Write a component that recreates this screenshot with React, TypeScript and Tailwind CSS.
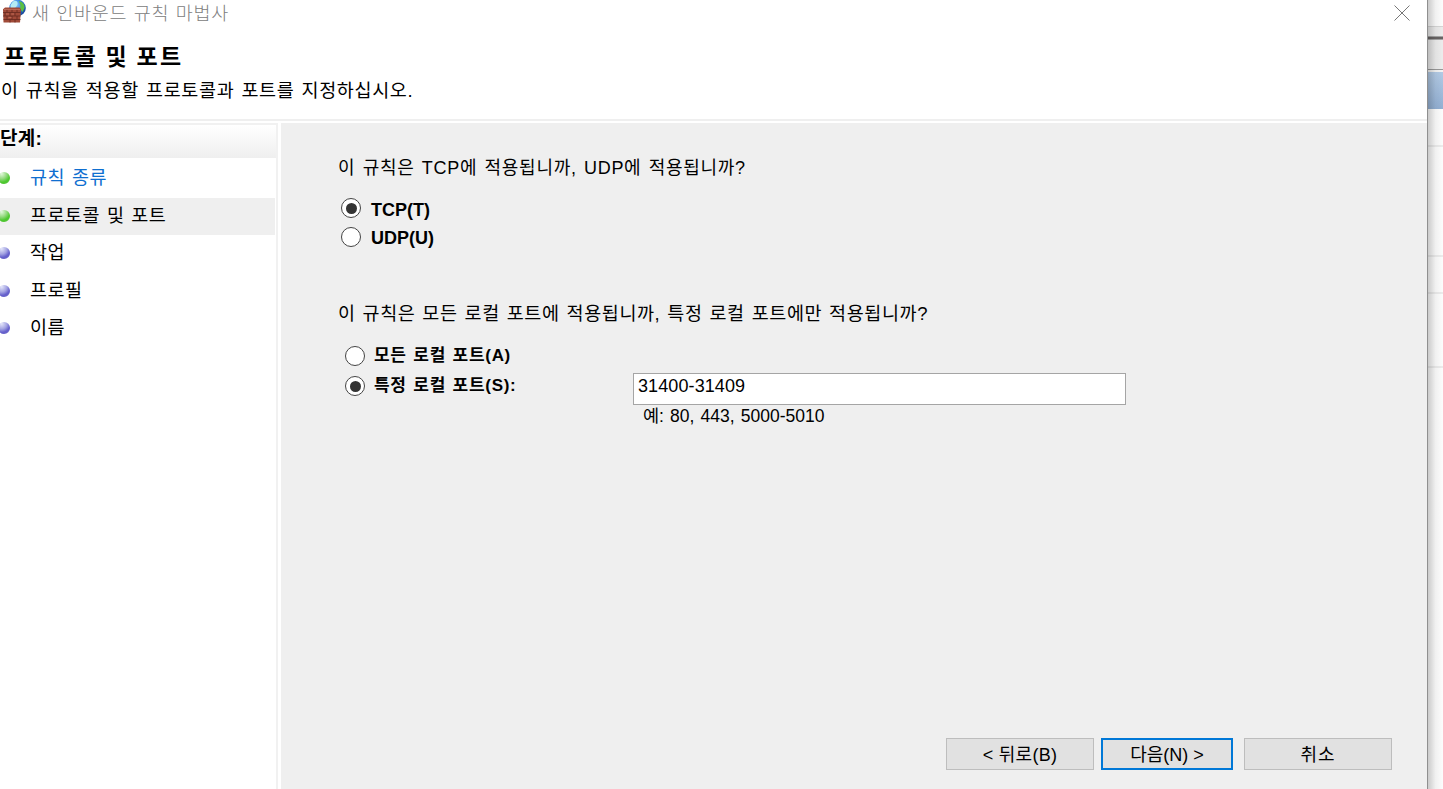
import React, { useState } from 'react';

const steps = [
  { label: '규칙 종류', done: true, link: true },
  { label: '프로토콜 및 포트', done: true, active: true },
  { label: '작업' },
  { label: '프로필' },
  { label: '이름' },
];

function FirewallIcon() {
  return (
    <svg width="26" height="26" viewBox="0 0 26 26" className="shrink-0">
      <defs>
        <radialGradient id="globe" cx="0.4" cy="0.3" r="0.75">
          <stop offset="0" stopColor="#8fd4ff" />
          <stop offset="0.5" stopColor="#2f7fdc" />
          <stop offset="1" stopColor="#123a8c" />
        </radialGradient>
      </defs>
      <circle cx="16.5" cy="8" r="8.3" fill="url(#globe)" />
      <path d="M12 1.500c3-1.600 5 0 4.500 2.500s-2 2.500-2.500 5l-4.500 0.500 0-4.500z" fill="#b4ecf4" />
      <path d="M18 1c4 1 6 4 5.500 7l-2 4-2.500-3.500 0.500-3z" fill="#5cc043" />
      <path d="M2 9.200L4 7.500h14.500L20 9.200 19 22.500H2.500z" fill="#a04a38" />
      <path
        d="M2 12.500h17.500M2 16h17.500M2.500 19.500h17M6 9v3.500M11 9v3.500M16 9v3.500M4 12.500V16M9 12.500V16M14 12.500V16M6 16v3.500M11 16v3.500M16 16v3.500M9 19.500v3M14 19.500v3"
        stroke="#662a20"
        strokeWidth="0.8"
      />
      <path d="M3 9.500h16M5 14h3M10.500 14h2.500M7.500 17.500h3" stroke="#c0705c" strokeWidth="0.8" />
    </svg>
  );
}

function Bullet({ done }: { done?: boolean }) {
  return (
    <span
      className={
        done
          ? 'size-3 shrink-0 rounded-full bg-[radial-gradient(circle_at_30%_15%,#e2f8dc_0%,#8fd87a_40%,#4cc82e_65%,#5cbf45_100%)]'
          : 'size-3 shrink-0 rounded-full bg-[radial-gradient(circle_at_30%_15%,#e4e6fa_0%,#a3a3e2_40%,#6560cc_65%,#6c68c4_100%)]'
      }
    />
  );
}

function Radio({ checked }: { checked: boolean }) {
  return (
    <span className="flex size-5 shrink-0 items-center justify-center rounded-full border-[1.5px] border-[#444] bg-white">
      {checked && <span className="size-[11px] rounded-full bg-[#333]" />}
    </span>
  );
}

function App() {
  const [protocol, setProtocol] = useState('TCP');
  const [scope, setScope] = useState('specific');

  return (
    <div className="flex h-[789px] w-[1443px] overflow-hidden bg-white font-['Liberation_Sans','Noto_Sans_CJK_KR',sans-serif] text-[18px] leading-6 whitespace-nowrap text-black">
      <div className="flex w-[1427px] shrink-0 flex-col">
        <header className="h-[119px] shrink-0">
          <div className="flex h-[26px] items-start justify-between">
            <div className="flex items-start pl-px">
              <FirewallIcon />
              <span className="pl-[5px] font-['Noto_Sans_CJK_KR',sans-serif] text-[18.5px] font-light tracking-[0.75px] text-[#808080] [word-spacing:1.6px]">
                새 인바운드 규칙 마법사
              </span>
            </div>
            <svg width="16" height="16" viewBox="0 0 16 16" className="mt-[5px] mr-[17px]" stroke="#777" strokeWidth="1">
              <path d="M0.500 0.500l15 15M15.500 0.500l-15 15" />
            </svg>
          </div>
          <h1 className="pt-[19px] pl-1 text-[23px] font-bold tracking-[2.4px] [word-spacing:-1.5px]">
            프로토콜 및 포트
          </h1>
          <p className="pt-[10px] pl-px text-[18.5px] tracking-[0.65px] [word-spacing:1.3px]">
            이 규칙을 적용할 프로토콜과 포트를 지정하십시오.
          </p>
        </header>
        <div className="h-[4px] shrink-0 border-t-2 border-[#efefef]" />

        <div className="flex min-h-0 flex-1">
          <nav className="w-[278px] shrink-0 border-t-2 border-r-2 border-[#f1f1f1]">
            <h2 className="h-[33px] bg-linear-to-b from-white to-[#efefef] pt-[2px] text-[19px] font-bold tracking-[0.3px]">
              단계:
            </h2>
            <ul className="pt-[2px]">
              {steps.map((step) => (
                <li
                  key={step.label}
                  className={
                    step.active
                      ? 'mr-px flex h-[37.500px] items-center bg-[#efefef]'
                      : 'mr-px flex h-[37.500px] items-center'
                  }
                >
                  <span className="-mt-px -ml-[2px] flex">
                    <Bullet done={step.done} />
                  </span>
                  <span
                    className={
                      step.link
                        ? 'pb-px pl-5 text-[18.5px] tracking-[0.5px] text-[#0f6fd0] [word-spacing:1.2px]'
                        : 'pb-px pl-5 text-[18.5px] tracking-[0.5px] [word-spacing:1.2px]'
                    }
                  >
                    {step.label}
                  </span>
                </li>
              ))}
            </ul>
          </nav>

          <main className="ml-[3px] flex flex-1 flex-col bg-[#efefef] pl-[57px]">
            <p className="pt-[33px] tracking-[0.7px] [word-spacing:1.7px]">
              이 규칙은 TCP에 적용됩니까, UDP에 적용됩니까?
            </p>
            <div className="flex flex-col gap-[9px] pt-[18px] pl-[3px] font-bold">
              <label className="flex h-5 items-center gap-[10px]" onClick={() => setProtocol('TCP')}>
                <Radio checked={protocol === 'TCP'} />
                <span className="pt-[3px]">TCP(T)</span>
              </label>
              <label className="flex h-5 items-center gap-[10px]" onClick={() => setProtocol('UDP')}>
                <Radio checked={protocol === 'UDP'} />
                <span className="pt-px">UDP(U)</span>
              </label>
            </div>

            <p className="pt-[55px] text-[18.5px] tracking-[0.6px] [word-spacing:1.2px]">
              이 규칙은 모든 로컬 포트에 적용됩니까, 특정 로컬 포트에만 적용됩니까?
            </p>
            <div className="flex pt-5 pl-[7px]">
              <div className="flex w-[288px] flex-col gap-[10px] text-[17px] font-bold tracking-[0.7px] [word-spacing:1.2px]">
                <label className="flex h-5 items-center gap-[9px]" onClick={() => setScope('all')}>
                  <Radio checked={scope === 'all'} />
                  <span>모든 로컬 포트(A)</span>
                </label>
                <label className="flex h-5 items-center gap-[9px]" onClick={() => setScope('specific')}>
                  <Radio checked={scope === 'specific'} />
                  <span>특정 로컬 포트(S):</span>
                </label>
              </div>
              <div className="pt-[27px]">
                <input
                  className="block h-8 w-[493px] border border-[#a5a5a5] bg-white px-1 pb-[5px] tracking-[0.1px] outline-none"
                  defaultValue="31400-31409"
                />
                <p className="-mt-px pl-[10px] text-[17.5px] [word-spacing:1.3px]">예: 80, 443, 5000-5010</p>
              </div>
            </div>

            <div className="mt-auto flex pb-[19px] pl-[608px]">
              <button className="h-8 w-[148px] border border-[#bdbdbd] bg-[#e1e1e1] pt-[2px] tracking-[0.3px]">
                &lt; 뒤로(B)
              </button>
              <button className="ml-[7px] h-8 w-[132px] border-2 border-[#0078d7] bg-[#e1e1e1] pt-[2px]">
                다음(N) &gt;
              </button>
              <button className="ml-[11px] h-8 w-[148px] border border-[#bdbdbd] bg-[#e1e1e1] pt-[2px] tracking-[1px]">
                취소
              </button>
            </div>
          </main>
        </div>
      </div>

      <aside className="relative flex w-4 shrink-0 flex-col bg-[#fdfdfd]">
        <div className="h-[26px]" />
        <div className="h-[10px] border-t border-[#d5d5d5] bg-[#ececec]" />
        <div className="h-[4px] border-y border-[#a5a5a5] bg-[#686464]" />
        <div className="h-[29px] bg-[#ededed]" />
        <div className="h-[3px] border-t border-[#999] bg-[#f4f4f4]" />
        <div className="h-[37px] bg-linear-to-b from-[#b3cbe6] to-[#93b0d3]" />
        <div className="h-[38px] border-b-2 border-[#ececec]" />
        <div className="h-[110px] border-b-2 border-[#ececec]" />
        <div className="h-[37px] border-b-2 border-[#ececec]" />
        <div className="h-[74px] border-b-2 border-[#ececec]" />
        {/* window drop shadow over the pane behind */}
        <div className="absolute inset-0 border-l border-[#8f8f8f] bg-linear-to-r from-black/20 via-black/5 to-transparent" />
      </aside>
    </div>
  );
}

export default App;
